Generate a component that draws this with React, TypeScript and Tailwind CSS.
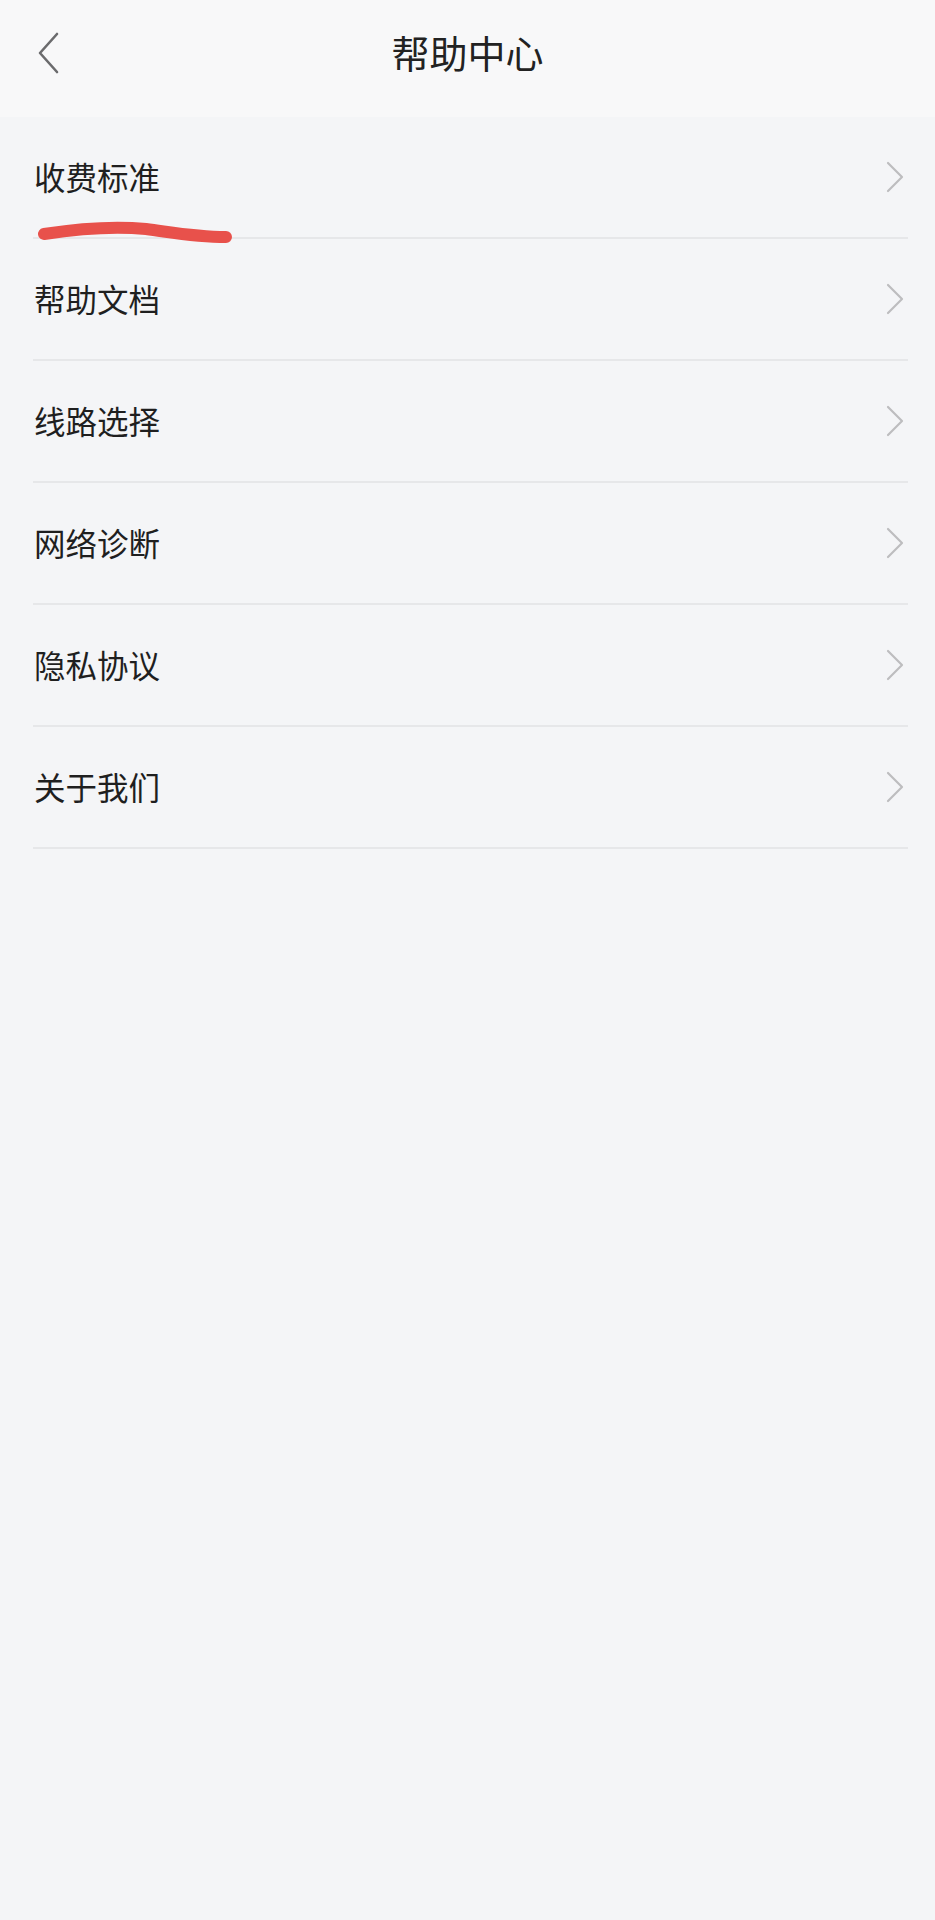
const ITEMS = ['收费标准', '帮助文档', '线路选择', '网络诊断', '隐私协议', '关于我们']

const FONT = "font-['Noto_Sans_CJK_SC','Noto_Sans',sans-serif]"

function BackIcon() {
  return (
    <svg width="24" height="42" viewBox="0 0 24 42" fill="none">
      <path d="M21 2 L4 21 L21 40" stroke="#6b6b6d" strokeWidth="2.6" strokeLinecap="round" strokeLinejoin="round" />
    </svg>
  )
}

function Chevron() {
  return (
    <svg width="20" height="32" viewBox="0 0 20 32" fill="none">
      <path d="M3 2 L17 16 L3 30" stroke="#bdbdbf" strokeWidth="2.2" strokeLinecap="round" strokeLinejoin="round" />
    </svg>
  )
}

function Scribble() {
  // red marker stroke drawn under the first item
  return (
    <svg
      className="pointer-events-none absolute left-[36px] top-[98px]"
      width="202"
      height="34"
      viewBox="0 0 202 34"
      fill="none"
    >
      <path
        d="M8 19 C 40 14, 80 11, 110 14 C 140 18, 160 22, 190 22"
        stroke="#e8514b"
        strokeWidth="12"
        strokeLinecap="round"
      />
    </svg>
  )
}

export default function App() {
  return (
    <div className={`min-h-[1920px] w-full bg-[#f4f5f7] ${FONT}`}>
      <header className="relative flex h-[117px] items-center justify-center bg-[#f8f8f9]">
        <button className="absolute left-[36px] top-[32px]">
          <BackIcon />
        </button>
        <h1 className="-mt-[14px] text-[38px] font-normal text-[#222]">帮助中心</h1>
      </header>

      <ul>
        {ITEMS.map((label, i) => (
          <li key={label} className="relative">
            <div className="flex h-[120px] items-center justify-between pl-[34px] pr-[30px]">
              <span className="text-[31.5px] text-[#1f1f1f]">{label}</span>
              <Chevron />
            </div>
            <div className="ml-[33px] mr-[27px] h-[2px] bg-[#e6e7e9]" />
            {i === 0 && <Scribble />}
          </li>
        ))}
      </ul>
    </div>
  )
}
